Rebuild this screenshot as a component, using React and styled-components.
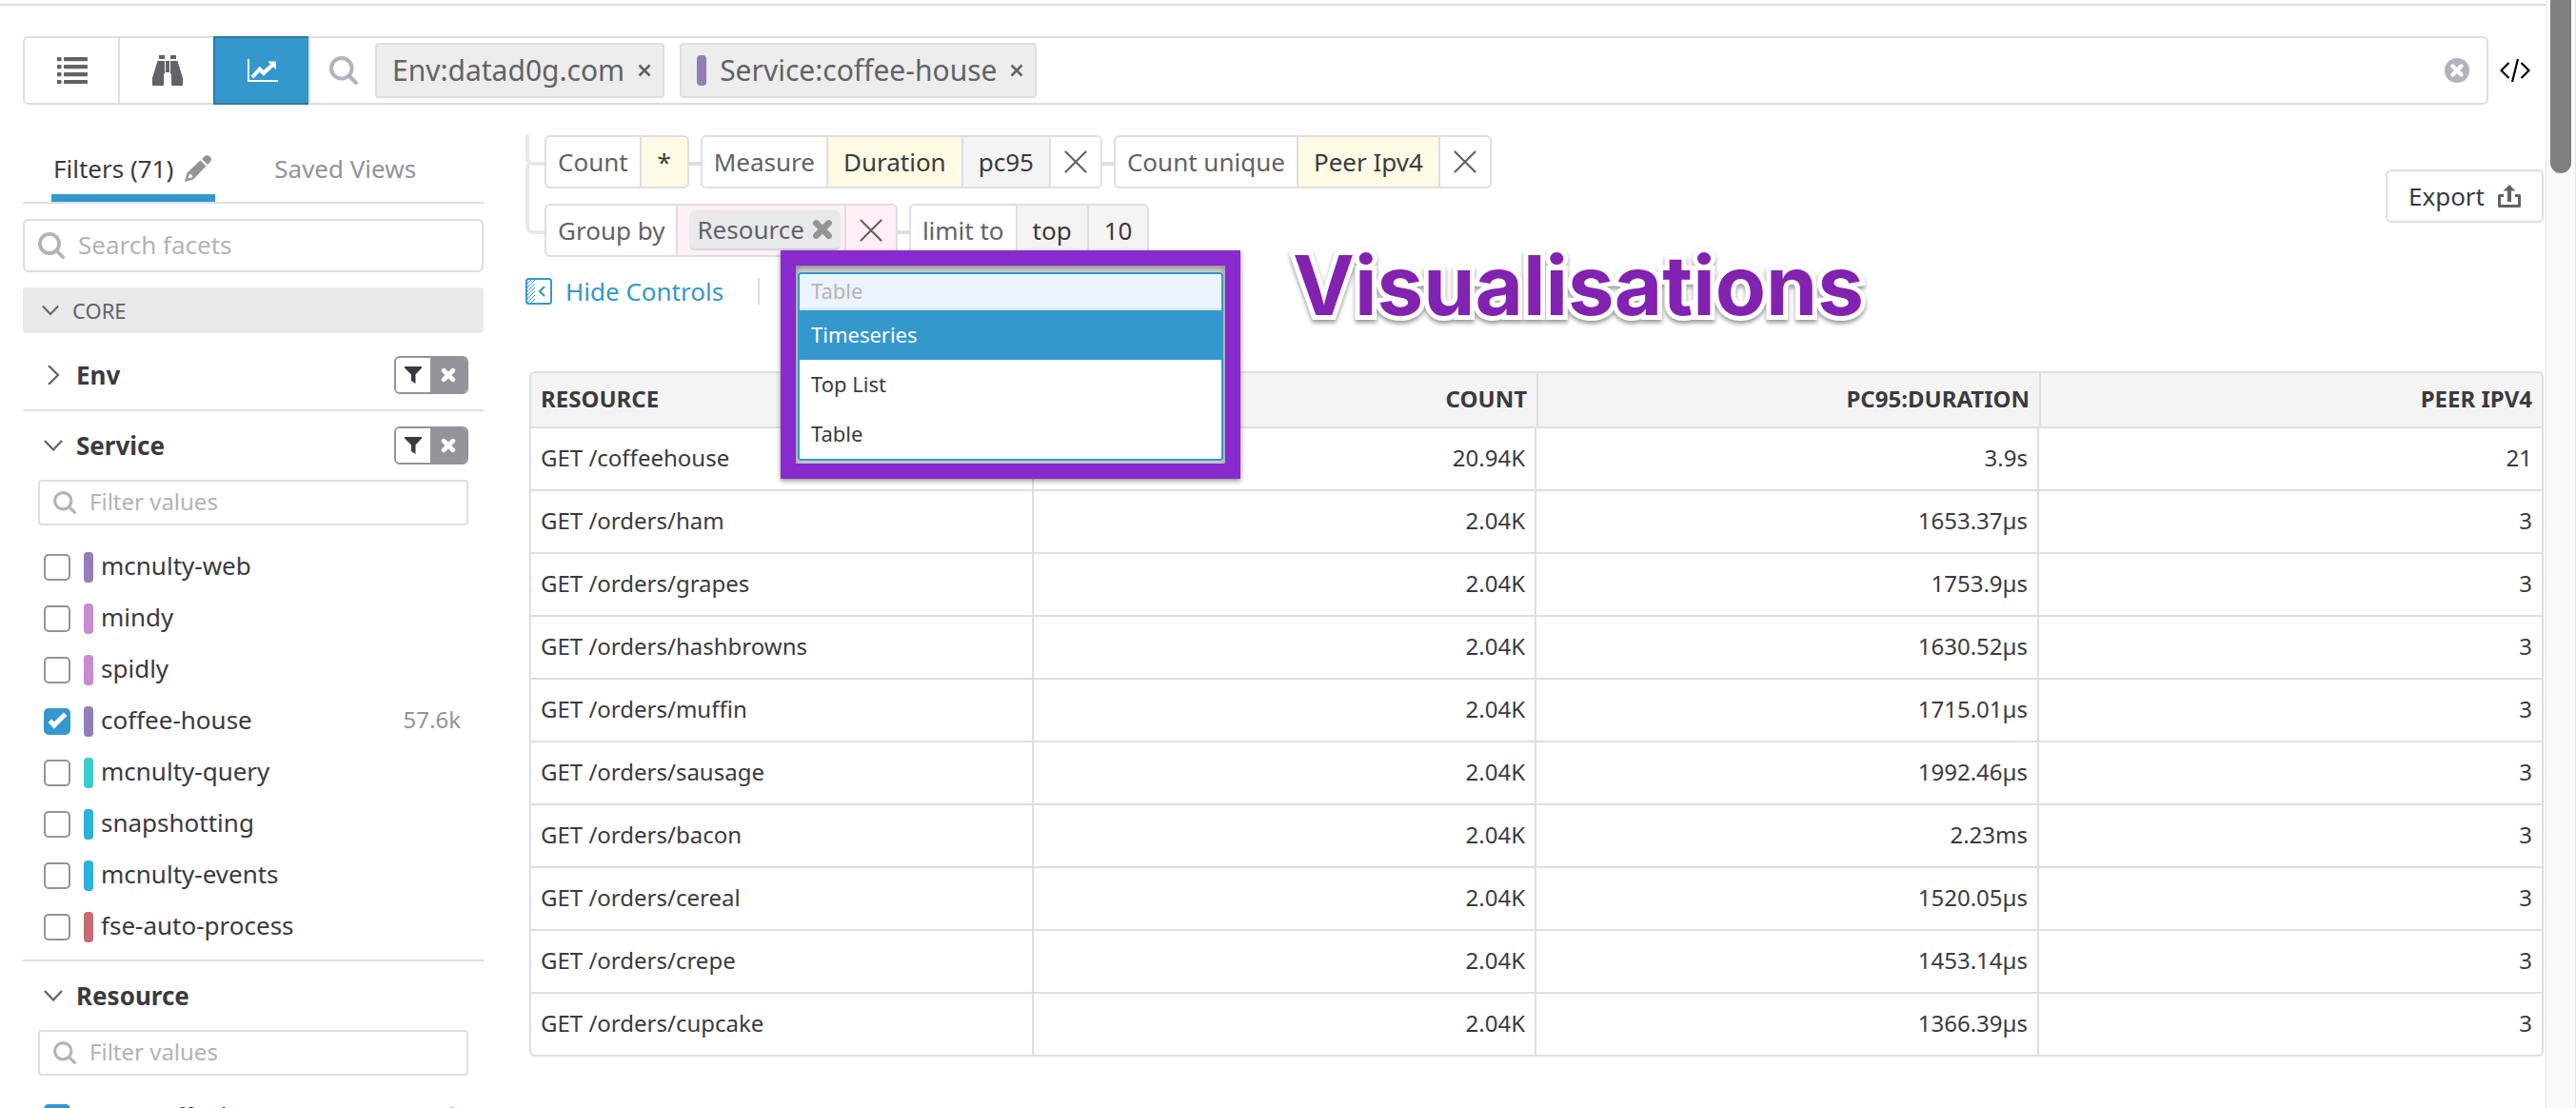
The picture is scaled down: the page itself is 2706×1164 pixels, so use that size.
import React from 'react';
import styled, { createGlobalStyle } from 'styled-components';

const c = {
  text: '#3b3a40',
  mid: '#636266',
  muted: '#949399',
  faint: '#b4b2ba',
  line: '#dedee3',
  blue: '#3498cd',
  purple: '#882acd',
};

const GlobalStyle = createGlobalStyle`
  *, *::before, *::after { box-sizing: border-box; }
  body {
    margin: 0;
    overflow: hidden;
    background: #fff;
    color: ${c.text};
    font-family: 'Noto Sans', 'Open Sans', sans-serif;
    font-size: 26px;
    line-height: 32px;
  }
  button, input { font: inherit; color: inherit; }
  button { margin: 0; padding: 0; border: 0; background: none; cursor: pointer; }
  svg { display: block; flex: none; }
`;

const Shell = styled.div`
  display: flex;
  height: 100vh;
  overflow: hidden;
`;

const Page = styled.div`
  flex: 1;
  min-width: 0;
  margin-top: 4px;
  padding: 32px 2px 0 24px;
  border-top: 2px solid ${c.line};
`;

const ScrollTrack = styled.div`
  width: 32px;
  flex: none;
  display: flex;
  justify-content: center;
  background: #fafafa;
  border: solid #e6e6e6;
  border-width: 0 1px;
`;

const ScrollThumb = styled.div`
  width: 22px;
  height: 182px;
  border-radius: 0 0 11px 11px;
  background: #7f7f7f;
`;

const TopBar = styled.header`
  display: flex;
  align-items: center;
  padding-right: 14px;
`;

const SearchBar = styled.div`
  flex: 1;
  min-width: 0;
  height: 72px;
  display: flex;
  align-items: center;
  border: 2px solid ${c.line};
  border-radius: 6px;
  padding-right: 18px;
`;

const ModeButton = styled.button`
  align-self: stretch;
  width: 100px;
  margin: -2px 0 -2px ${(p) => (p.$first ? '-2px' : '0')};
  padding-left: ${(p) => (p.$first ? 4 : 2)}px;
  ${(p) => p.$first && 'width: 102px;'}
  display: flex;
  align-items: center;
  justify-content: center;
  color: ${(p) => (p.$active ? '#fff' : c.mid)};
  background: ${(p) => (p.$active ? c.blue : 'transparent')};
  border: solid ${(p) => (p.$active ? '#2a7aa5' : c.line)};
  border-width: ${(p) => (p.$active ? '2px 0 2px 2px' : '0 2px 0 0')};
  ${(p) => p.$beforeActive && 'width: 98px; border-right: 0;'}
`;

const SearchLead = styled.span`
  align-self: stretch;
  display: flex;
  align-items: center;
  padding: 0 18px 0 20px;
  border-left: 2px solid ${c.line};
  color: ${c.faint};
`;

const Chip = styled.span`
  height: 58px;
  display: flex;
  align-items: center;
  margin-right: 16px;
  padding: 0 10px 0 16px;
  border: 2px solid ${c.line};
  border-radius: 4px;
  background: #ededed;
  color: ${c.mid};
  font-size: 30px;
  line-height: 40px;
`;

const ChipClose = styled.button`
  margin-left: 12px;
  padding: 4px 2px;
`;

const Swatch = styled.span`
  width: 10px;
  height: 32px;
  flex: none;
  border-radius: 4px;
  background: ${(p) => p.$color};
  margin-right: ${(p) => p.$gap || 8}px;
`;

const ClearButton = styled.button`
  margin-left: auto;
`;

const CodeButton = styled.button`
  margin-left: 12px;
  color: #000;
`;

const Columns = styled.div`
  display: flex;
  align-items: flex-start;
  gap: 44px;
  padding-top: 32px;
`;

const Sidebar = styled.aside`
  width: 484px;
  flex: none;
`;

const Tabs = styled.nav`
  height: 72px;
  display: flex;
  gap: 60px;
  padding: 0 30px;
  border-bottom: 2px solid ${c.line};
`;

const Tab = styled.button`
  display: flex;
  align-items: center;
  gap: 12px;
  padding: 12px 4px ${(p) => (p.$active ? 4 : 12)}px 2px;
  border-bottom: ${(p) => (p.$active ? `8px solid ${c.blue}` : '0')};
  color: ${(p) => (p.$active ? c.text : c.muted)};
  svg { color: ${c.muted}; }
`;

const FieldBox = styled.label`
  display: flex;
  align-items: center;
  gap: 14px;
  height: ${(p) => (p.$small ? 48 : 56)}px;
  margin: ${(p) => (p.$small ? '0 16px' : '16px 0')};
  padding: 0 14px;
  border: 2px solid ${c.line};
  border-radius: ${(p) => (p.$small ? 4 : 6)}px;
  color: ${c.faint};
  font-size: ${(p) => (p.$small ? 24 : 26)}px;
`;

const BareInput = styled.input`
  flex: 1;
  min-width: 0;
  padding: 0 0 2px;
  border: 0;
  outline: 0;
  background: transparent;
  &::placeholder { color: ${c.faint}; opacity: 1; }
`;

const GroupHeading = styled.button`
  width: 100%;
  height: 48px;
  display: flex;
  align-items: center;
  gap: 14px;
  margin-bottom: 8px;
  padding-left: 20px;
  border-radius: 4px;
  background: #e9e9eb;
  color: ${c.mid};
  font-size: 22px;
`;

const Facet = styled.section`
  border-bottom: 2px solid ${c.line};
`;

const FacetHeader = styled.div`
  height: 72px;
  display: flex;
  align-items: center;
  justify-content: space-between;
  padding: 0 16px 0 22px;
`;

const FacetTitle = styled.button`
  display: flex;
  align-items: center;
  gap: 14px;
  font-weight: 700;
  svg { color: ${c.mid}; }
`;

const FilterToggle = styled.div`
  display: flex;
  width: 78px;
  height: 40px;
  overflow: hidden;
  border: 2px solid ${c.muted};
  border-radius: 6px;
`;

const ToggleHalf = styled.button`
  width: ${(p) => (p.$filled ? 38 : 36)}px;
  display: flex;
  align-items: center;
  justify-content: center;
  background: ${(p) => (p.$filled ? c.muted : '#fff')};
  color: ${(p) => (p.$filled ? '#fff' : c.text)};
`;

const ValueList = styled.ul`
  display: flex;
  flex-direction: column;
  gap: 22px;
  margin: 0;
  padding: 28px 24px 18px 22px;
  list-style: none;
`;

const ValueRow = styled.li`
  height: 32px;
  display: flex;
  align-items: center;
`;

const ValueLabel = styled.label`
  flex: 1;
  display: flex;
  align-items: center;
`;

const ValueName = styled.span`
  padding: 0 0 4px ${(p) => (p.$inset ? 4 : 0)}px;
`;

const CheckInput = styled.input`
  appearance: none;
  width: 28px;
  height: 28px;
  flex: none;
  display: grid;
  place-items: center;
  margin: 0 14px 0 0;
  border: 2px solid ${c.muted};
  border-radius: 5px;
  background: #fff;
  &:checked { border-color: ${c.blue}; background: ${c.blue}; }
  &:checked::before {
    content: '';
    width: 19px;
    height: 9px;
    margin-bottom: 6px;
    border: solid #fff;
    border-width: 0 0 5px 5px;
    transform: rotate(-45deg);
  }
`;

const ValueCount = styled.span`
  padding-bottom: 4px;
  color: ${c.muted};
  font-size: 24px;
`;

const Main = styled.main`
  flex: 1;
  min-width: 0;
`;

const QueryArea = styled.div`
  display: flex;
  align-items: flex-start;
`;

const Tree = styled.div`
  width: 20px;
  display: flex;
  flex-direction: column;
`;

const Branch = styled.span`
  height: ${(p) => p.$length}px;
  border: solid #e8e8eb;
  border-width: 0 0 4px 4px;
  border-bottom-left-radius: 8px;
  & + & { margin-top: -4px; border-top-left-radius: 6px; }
`;

const QueryRows = styled.div`
  flex: 1;
  display: flex;
  flex-direction: column;
  gap: 16px;
`;

const QueryRow = styled.div`
  display: flex;
  align-items: center;
`;

const Connector = styled.span`
  width: 12px;
  height: 4px;
  margin-top: 4px;
  background: ${c.line};
`;

const Clause = styled.div`
  height: 56px;
  display: flex;
  overflow: hidden;
  border: 2px solid ${c.line};
  border-radius: 6px;
`;

const tones = { plain: '#fff', yellow: '#fffae3', grey: '#f4f4f4', pink: '#ffeff9' };

const ClauseLabel = styled.span`
  display: flex;
  align-items: center;
  padding: 0 12px;
  color: ${c.mid};
`;

const ClausePart = styled.button`
  display: flex;
  align-items: center;
  justify-content: center;
  min-width: 50px;
  padding: 0 16px;
  border-left: 2px solid ${c.line};
  background: ${(p) => tones[p.$tone]};
`;

const ClauseRemove = styled(ClausePart)`
  padding: 0 14px;
  color: ${c.mid};
`;

const GroupSlot = styled.div`
  display: flex;
  align-items: center;
  padding: 0 4px 0 12px;
  border-left: 2px solid ${c.line};
  background: ${tones.pink};
`;

const GroupTag = styled.span`
  height: 42px;
  display: flex;
  align-items: center;
  gap: 8px;
  padding: 0 8px;
  border-bottom: 2px solid #d6d6da;
  border-radius: 6px;
  background: #e9e9eb;
  color: ${c.mid};
  button { color: ${c.muted}; }
`;

const ExportButton = styled.button`
  height: 56px;
  display: flex;
  align-items: center;
  gap: 14px;
  margin-top: 36px;
  padding: 0 22px;
  border: 2px solid ${c.line};
  border-radius: 6px;
  svg { color: ${c.mid}; }
`;

const Controls = styled.div`
  position: relative;
  height: 72px;
  margin-bottom: 48px;
  display: flex;
  align-items: center;
`;

const HideControls = styled.button`
  display: flex;
  align-items: center;
  gap: 14px;
  padding-right: 36px;
  color: ${c.blue};
`;

const Separator = styled.span`
  width: 2px;
  height: 28px;
  background: ${c.line};
`;

const Highlight = styled.div`
  position: absolute;
  z-index: 2;
  top: -7px;
  left: 268px;
  width: 483px;
  padding: 7px 2px 3px;
  border: 16px solid ${c.purple};
  background: #d2d2d2;
  box-shadow: 0 2px 5px rgba(0, 0, 0, 0.45), inset 0 2px 6px rgba(0, 0, 0, 0.4);
`;

const VizSelect = styled.div`
  overflow: hidden;
  border: 2px solid ${c.blue};
  border-radius: 4px;
  background: #fff;
  font-size: 22px;
`;

const VizInput = styled(BareInput)`
  display: block;
  width: 100%;
  height: 38px;
  padding: 0 12px 2px;
  border-bottom: 2px solid ${c.line};
  background: #ebf4fa;
`;

const VizOption = styled.button`
  display: block;
  width: 100%;
  height: 52px;
  padding: 0 12px 2px;
  text-align: left;
  color: ${(p) => (p.$active ? '#fff' : c.text)};
  background: ${(p) => (p.$active ? c.blue : '#fff')};
`;

const Caption = styled.h1`
  position: absolute;
  z-index: 2;
  top: -20px;
  left: 806px;
  margin: 0;
  color: #8222b0;
  font: 700 87px/100px Inter, 'Liberation Sans', sans-serif;
  -webkit-text-stroke: 10px #fff;
  paint-order: stroke fill;
  filter: drop-shadow(0 3px 2px rgba(0, 0, 0, 0.4));
`;

const TableWrap = styled.div`
  margin: 0 0 0 4px;
  overflow: hidden;
  border: 2px solid ${c.line};
  border-radius: 6px;
`;

const DataTable = styled.table`
  width: 100%;
  table-layout: fixed;
  border-collapse: separate;
  border-spacing: 0;
  font-size: 24px;
`;

const HeadCell = styled.th`
  height: 58px;
  padding: 0 10px 2px;
  text-align: ${(p) => (p.$left ? 'left' : 'right')};
  border-bottom: 2px solid ${c.line};
  background: #f4f4f4;
  & + & { border-left: 2px solid ${c.line}; }
`;

const Cell = styled.td`
  height: 66px;
  padding: 0 10px 2px;
  text-align: ${(p) => (p.$left ? 'left' : 'right')};
  border-bottom: 2px solid ${c.line};
  border-right: 2px solid ${c.line};
  &:last-child { border-right: 0; }
  tr:last-child > & { height: 64px; border-bottom: 0; }
`;

/* Icons */
const Svg = ({ w, h = w, box, children, ...rest }) => (
  <svg width={w} height={h} viewBox={box || `0 0 ${w} ${h}`} fill="currentColor" aria-hidden="true" {...rest}>
    {children}
  </svg>
);

const ListIcon = () => (
  <Svg w={32} h={28}>
    {[0, 8, 16, 24].map((y) => (
      <g key={y}>
        <rect y={y} width="4.500" height="4.200" rx="0.8" />
        <rect x="7" y={y} width="25" height="4.200" rx="0.8" />
      </g>
    ))}
  </Svg>
);

const BinocularsIcon = () => (
  <Svg w={32}>
    <path d="M7 0h6v4H7zM19 0h6v4h-6zM14 6h4v12h-4zM5.500 6H13v13l-1 1.500V31q0 1-1 1H1q-1 0-1-1v-7zM26.500 6H19v13l1 1.500V31q0 1 1 1h10q1 0 1-1v-7z" />
  </Svg>
);

const ChartIcon = () => (
  <Svg w={32} h={26} box="0 0 32 26">
    <path d="M0 1h2v22h30v2H0zM3.500 18.800L12.800 8.800l4 4 7.400-6.300-2.700-3H30v8.500l-3-2.800L17 18.800l-4.300-4L6.200 21.600z" />
  </Svg>
);

const SearchIcon = ({ size }) => (
  <Svg w={size} box="0 0 30 30" fill="none" stroke="currentColor" strokeWidth="4">
    <circle cx="12.800" cy="12.800" r="10.800" />
    <path d="M20.500 20.500L28 28" strokeLinecap="round" />
  </Svg>
);

const SmallCross = () => (
  <Svg w={14} fill="none" stroke="currentColor" strokeWidth="2.600">
    <path d="M1.500 1.500l11 11M12.500 1.500l-11 11" />
  </Svg>
);

const ThinCross = () => (
  <Svg w={24} fill="none" stroke="currentColor" strokeWidth="2.200" strokeLinecap="round">
    <path d="M1.500 1.500l21 21M22.500 1.500l-21 21" />
  </Svg>
);

const HeavyCross = ({ size }) => (
  <Svg w={size} box="0 0 20 20" fill="none" stroke="currentColor" strokeWidth="6" strokeLinecap="round">
    <path d="M4 4l12 12M16 4L4 16" />
  </Svg>
);

const ClearIcon = () => (
  <Svg w={26}>
    <circle cx="13" cy="13" r="13" fill={c.faint} />
    <path d="M8.500 8.500l9 9M17.500 8.500l-9 9" stroke="#fff" strokeWidth="4.400" strokeLinecap="round" />
  </Svg>
);

const CodeIcon = () => (
  <Svg w={32} h={24} fill="none" stroke="currentColor" strokeWidth="2.200">
    <path d="M9.500 4L1.500 12l8 8M22.500 4l8 8-8 8M19 0l-6 24" />
  </Svg>
);

const PencilIcon = () => (
  <Svg w={28}>
    <path d="M18 4l2.500-2.500q3-3 6 0t0 6L24 10zM16.500 5.500l6 6L9 25.500 0 28l2.500-9.500zM5 19.500l-1.500 5 5-1.300-.8-2.400z" fillRule="evenodd" />
  </Svg>
);

const ChevronDown = ({ w }) => (
  <Svg w={w} h={12} box="0 0 20 12" fill="none" stroke="currentColor" strokeWidth="2.200">
    <path d="M1 1l9 9.500L19 1" />
  </Svg>
);

const ChevronRight = () => (
  <Svg w={20} fill="none" stroke="currentColor" strokeWidth="2.200">
    <path d="M5 0l10 10L5 20" />
  </Svg>
);

const FunnelIcon = () => (
  <Svg w={18}>
    <path d="M0 0h18v1.500L11.500 8.500V18L7 15V8.500L0 1.500z" />
  </Svg>
);

const ExportIcon = () => (
  <Svg w={24}>
    <path d="M12 0l6.500 6.500H14V18h-4V6.500H5.500z" />
    <path d="M6 11.500H1.500V22.500h21V11.500H18" fill="none" stroke="currentColor" strokeWidth="3" strokeLinejoin="round" />
  </Svg>
);

const PanelIcon = () => (
  <Svg w={28} fill="none" stroke="currentColor">
    <rect x="1" y="1" width="26" height="26" rx="2.500" strokeWidth="2" />
    <path d="M2 6l5-5M2 10l8-8M2 14l8-8M2 18l8-8M2 22l8-8M2 26l8-8M5 27l5-5" strokeWidth="1" />
    <path d="M20 9l-5 5 5 5" strokeWidth="2.200" />
  </Svg>
);

const services = [
  ['mcnulty-web', '#927eb9'],
  ['mindy', '#c88bce'],
  ['spidly', '#c88bce'],
  ['coffee-house', '#927eb9', '57.6k'],
  ['mcnulty-query', '#3bcbca'],
  ['snapshotting', '#2db1de'],
  ['mcnulty-events', '#2db1de'],
  ['fse-auto-process', '#c86a72'],
];

const rows = [
  ['GET /coffeehouse', '20.94K', '3.9s', '21'],
  ['GET /orders/ham', '2.04K', '1653.37µs', '3'],
  ['GET /orders/grapes', '2.04K', '1753.9µs', '3'],
  ['GET /orders/hashbrowns', '2.04K', '1630.52µs', '3'],
  ['GET /orders/muffin', '2.04K', '1715.01µs', '3'],
  ['GET /orders/sausage', '2.04K', '1992.46µs', '3'],
  ['GET /orders/bacon', '2.04K', '2.23ms', '3'],
  ['GET /orders/cereal', '2.04K', '1520.05µs', '3'],
  ['GET /orders/crepe', '2.04K', '1453.14µs', '3'],
  ['GET /orders/cupcake', '2.04K', '1366.39µs', '3'],
];

function SearchField({ small, placeholder }) {
  return (
    <FieldBox $small={small}>
      <SearchIcon size={small ? 24 : 28} />
      <BareInput type="text" placeholder={placeholder} aria-label={placeholder} />
    </FieldBox>
  );
}

function FacetHead({ title, open, filtered }) {
  return (
    <FacetHeader>
      <FacetTitle aria-expanded={!!open}>
        {open ? <ChevronDown w={20} /> : <ChevronRight />}
        {title}
      </FacetTitle>
      {filtered && (
        <FilterToggle>
          <ToggleHalf aria-label={`Filter ${title}`}><FunnelIcon /></ToggleHalf>
          <ToggleHalf $filled aria-label={`Clear ${title}`}><HeavyCross size={16} /></ToggleHalf>
        </FilterToggle>
      )}
    </FacetHeader>
  );
}

function Value({ name, color, count }) {
  return (
    <ValueRow>
      <ValueLabel>
        <CheckInput type="checkbox" defaultChecked={!!count} />
        {color && <Swatch $color={color} />}
        <ValueName $inset={!color}>{name}</ValueName>
      </ValueLabel>
      {count && <ValueCount>{count}</ValueCount>}
    </ValueRow>
  );
}

const Remove = ({ tone = 'plain', label }) => (
  <ClauseRemove $tone={tone} aria-label={label}><ThinCross /></ClauseRemove>
);

export default function App() {
  return (
    <>
      <GlobalStyle />
      <Shell>
        <Page>
          <TopBar>
            <SearchBar>
              <ModeButton $first aria-label="List"><ListIcon /></ModeButton>
              <ModeButton $beforeActive aria-label="Explore"><BinocularsIcon /></ModeButton>
              <ModeButton $active aria-label="Analytics"><ChartIcon /></ModeButton>
              <SearchLead><SearchIcon size={30} /></SearchLead>
              <Chip>
                Env:datad0g.com
                <ChipClose aria-label="Remove env"><SmallCross /></ChipClose>
              </Chip>
              <Chip>
                <Swatch $color="#927eb9" $gap={14} />
                Service:coffee-house
                <ChipClose aria-label="Remove service"><SmallCross /></ChipClose>
              </Chip>
              <ClearButton aria-label="Clear search"><ClearIcon /></ClearButton>
            </SearchBar>
            <CodeButton aria-label="Show query"><CodeIcon /></CodeButton>
          </TopBar>
          <Columns>
            <Sidebar>
              <Tabs>
                <Tab $active>Filters (71)<PencilIcon /></Tab>
                <Tab>Saved Views</Tab>
              </Tabs>
              <SearchField placeholder="Search facets" />
              <GroupHeading><ChevronDown w={18} />CORE</GroupHeading>
              <Facet>
                <FacetHead title="Env" filtered />
              </Facet>
              <Facet>
                <FacetHead title="Service" open filtered />
                <SearchField small placeholder="Filter values" />
                <ValueList>
                  {services.map(([name, color, count]) => (
                    <Value key={name} name={name} color={color} count={count} />
                  ))}
                </ValueList>
              </Facet>
              <Facet>
                <FacetHead title="Resource" open />
                <SearchField small placeholder="Filter values" />
                <ValueList>
                  <Value name="GET /coffeehouse" count="20.9k" />
                </ValueList>
              </Facet>
            </Sidebar>
            <Main>
              <QueryArea>
                <Tree>
                  <Branch $length={32} />
                  <Branch $length={76} />
                </Tree>
                <QueryRows>
                  <QueryRow>
                    <Clause>
                      <ClauseLabel>Count</ClauseLabel>
                      <ClausePart $tone="yellow">*</ClausePart>
                    </Clause>
                    <Connector />
                    <Clause>
                      <ClauseLabel>Measure</ClauseLabel>
                      <ClausePart $tone="yellow">Duration</ClausePart>
                      <ClausePart $tone="grey">pc95</ClausePart>
                      <Remove label="Remove measure" />
                    </Clause>
                    <Connector />
                    <Clause>
                      <ClauseLabel>Count unique</ClauseLabel>
                      <ClausePart $tone="yellow">Peer Ipv4</ClausePart>
                      <Remove label="Remove count unique" />
                    </Clause>
                  </QueryRow>
                  <QueryRow>
                    <Clause>
                      <ClauseLabel>Group by</ClauseLabel>
                      <GroupSlot>
                        <GroupTag>
                          Resource
                          <button aria-label="Remove resource"><HeavyCross size={22} /></button>
                        </GroupTag>
                      </GroupSlot>
                      <Remove tone="pink" label="Remove group" />
                    </Clause>
                    <Connector />
                    <Clause>
                      <ClauseLabel>limit to</ClauseLabel>
                      <ClausePart $tone="grey">top</ClausePart>
                      <ClausePart $tone="grey">10</ClausePart>
                    </Clause>
                  </QueryRow>
                </QueryRows>
                <ExportButton>Export<ExportIcon /></ExportButton>
              </QueryArea>
              <Controls>
                <HideControls><PanelIcon />Hide Controls</HideControls>
                <Separator />
                <Highlight>
                  <VizSelect role="listbox" aria-label="Visualisation">
                    <VizInput type="text" placeholder="Table" aria-label="Visualisation type" />
                    <VizOption role="option" $active>Timeseries</VizOption>
                    <VizOption role="option">Top List</VizOption>
                    <VizOption role="option">Table</VizOption>
                  </VizSelect>
                </Highlight>
                <Caption>Visualisations</Caption>
              </Controls>
              <TableWrap>
                <DataTable>
                  <thead>
                    <tr>
                      <HeadCell $left>RESOURCE</HeadCell>
                      <HeadCell>COUNT</HeadCell>
                      <HeadCell>PC95:DURATION</HeadCell>
                      <HeadCell>PEER IPV4</HeadCell>
                    </tr>
                  </thead>
                  <tbody>
                    {rows.map((row) => (
                      <tr key={row[0]}>
                        {row.map((value, i) => (
                          <Cell key={i} $left={i === 0}>{value}</Cell>
                        ))}
                      </tr>
                    ))}
                  </tbody>
                </DataTable>
              </TableWrap>
            </Main>
          </Columns>
        </Page>
        <ScrollTrack>
          <ScrollThumb />
        </ScrollTrack>
      </Shell>
    </>
  );
}
